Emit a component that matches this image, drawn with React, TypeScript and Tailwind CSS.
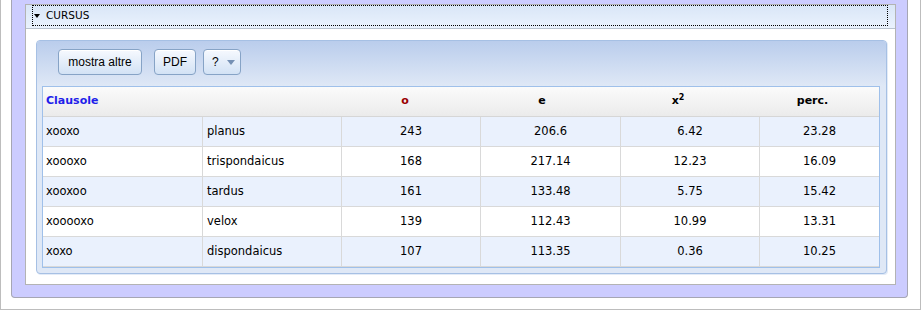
import React from 'react';

type Row = { pattern: string; name: string; o: string; e: string; x2: string; perc: string };

const rows: Row[] = [
  { pattern: 'xooxo', name: 'planus', o: '243', e: '206.6', x2: '6.42', perc: '23.28' },
  { pattern: 'xoooxo', name: 'trispondaicus', o: '168', e: '217.14', x2: '12.23', perc: '16.09' },
  { pattern: 'xooxoo', name: 'tardus', o: '161', e: '133.48', x2: '5.75', perc: '15.42' },
  { pattern: 'xooooxo', name: 'velox', o: '139', e: '112.43', x2: '10.99', perc: '13.31' },
  { pattern: 'xoxo', name: 'dispondaicus', o: '107', e: '113.35', x2: '0.36', perc: '10.25' },
];

const lucida = "font-['DejaVu_Sans',sans-serif]";

function ToolButton({ children, className = '' }: { children: React.ReactNode; className?: string }) {
  return (
    <button
      className={`flex h-[26px] items-center rounded-[4px] border border-[#86a3c6] bg-gradient-to-b from-[#f6f9fe] to-[#d2e2f5] font-['Liberation_Sans',sans-serif] text-[12px] text-black shadow-[inset_0_1px_0_#ffffff] ${className}`}
    >
      {children}
    </button>
  );
}

function DataRow({ row, odd }: { row: Row; odd: boolean }) {
  const cell = 'flex h-[30px] items-center border-b border-r border-[#d9d9d9]';
  return (
    <div
      className={`grid grid-cols-[160px_139px_139px_140px_139px_1fr] text-[11.5px] text-black ${odd ? 'bg-[#eaf1fd]' : 'bg-white'}`}
    >
      <div className={`${cell} pl-[3px]`}>{row.pattern}</div>
      <div className={`${cell} pl-[4px]`}>{row.name}</div>
      <div className={`${cell} justify-center`}>{row.o}</div>
      <div className={`${cell} justify-center`}>{row.e}</div>
      <div className={`${cell} justify-center`}>{row.x2}</div>
      <div className="flex h-[30px] items-center justify-center border-b border-[#d9d9d9]">{row.perc}</div>
    </div>
  );
}

export default function App() {
  return (
    <div className={`h-[312px] w-[922px] overflow-hidden bg-white ${lucida}`}>
      <div className="w-[921px] border-x border-b border-[#bdbdbd] pb-[11px] pl-[10px] pr-[12px]">
        <div className="rounded-b-[4px] border-x border-b border-[#a6a6b4] bg-[#ccccff] pb-[12px] pl-[13px] pr-[11px] pt-[4px]">
          <div className="border border-[#b3b3b3] bg-white">
            {/* section header */}
            <div className="h-[24px] border-b border-[#b9c3cf] bg-gradient-to-b from-[#d9e6f7] to-[#eaf2fd] pl-[6px] pr-[7px]">
              <div className="flex h-[21px] items-center border border-dotted border-black text-[10.5px] text-black">
                <span className="ml-[1px] mr-[5px] h-0 w-0 border-x-[3px] border-t-[4px] border-x-transparent border-t-black" />
                <span className="ml-[1px]">CURSUS</span>
              </div>
            </div>

            <div className="pb-[10px] pl-[10px] pr-[8px] pt-[11px]">
              <div className="rounded-[4px] border border-[#a6c0e4] bg-[#dfe8f6] shadow-[1px_1px_0_#e3ebf7]">
                {/* toolbar */}
                <div className="flex h-[45px] items-start gap-[7px] rounded-t-[3px] bg-gradient-to-b from-[#bacdec] to-[#dfe8f6] pl-[21px] pt-[8px]">
                  <ToolButton className="mr-[5px] w-[84px] justify-center">mostra altre</ToolButton>
                  <ToolButton className="w-[42px] justify-center">PDF</ToolButton>
                  <ToolButton className="w-[38px] pl-[8px]">
                    <span>?</span>
                    <span className="ml-[8px] h-0 w-0 border-x-[4px] border-t-[5px] border-x-transparent border-t-[#7590b4]" />
                  </ToolButton>
                </div>

                {/* table */}
                <div className="pb-[5px] pl-[5px] pr-[6px]">
                  <div className="border border-[#9fc0ea]">
                    <div className="grid h-[30px] grid-cols-[293px_138px_136px_136px_1fr] items-center border-b border-[#d6d6d6] bg-gradient-to-b from-[#fbfbfb] to-[#ebebeb] text-[11px] font-bold text-black">
                      <div className="pl-[3px] text-[#1f1fea]">Clausole</div>
                      <div className="text-center text-[#990000]">o</div>
                      <div className="text-center">e</div>
                      <div className="text-center">
                        x<sup className="text-[8px]">2</sup>
                      </div>
                      <div className="text-center">perc.</div>
                    </div>
                    {rows.map((row, i) => (
                      <DataRow key={row.pattern} row={row} odd={i % 2 === 0} />
                    ))}
                  </div>
                </div>
              </div>
            </div>
          </div>
        </div>
      </div>
    </div>
  );
}
